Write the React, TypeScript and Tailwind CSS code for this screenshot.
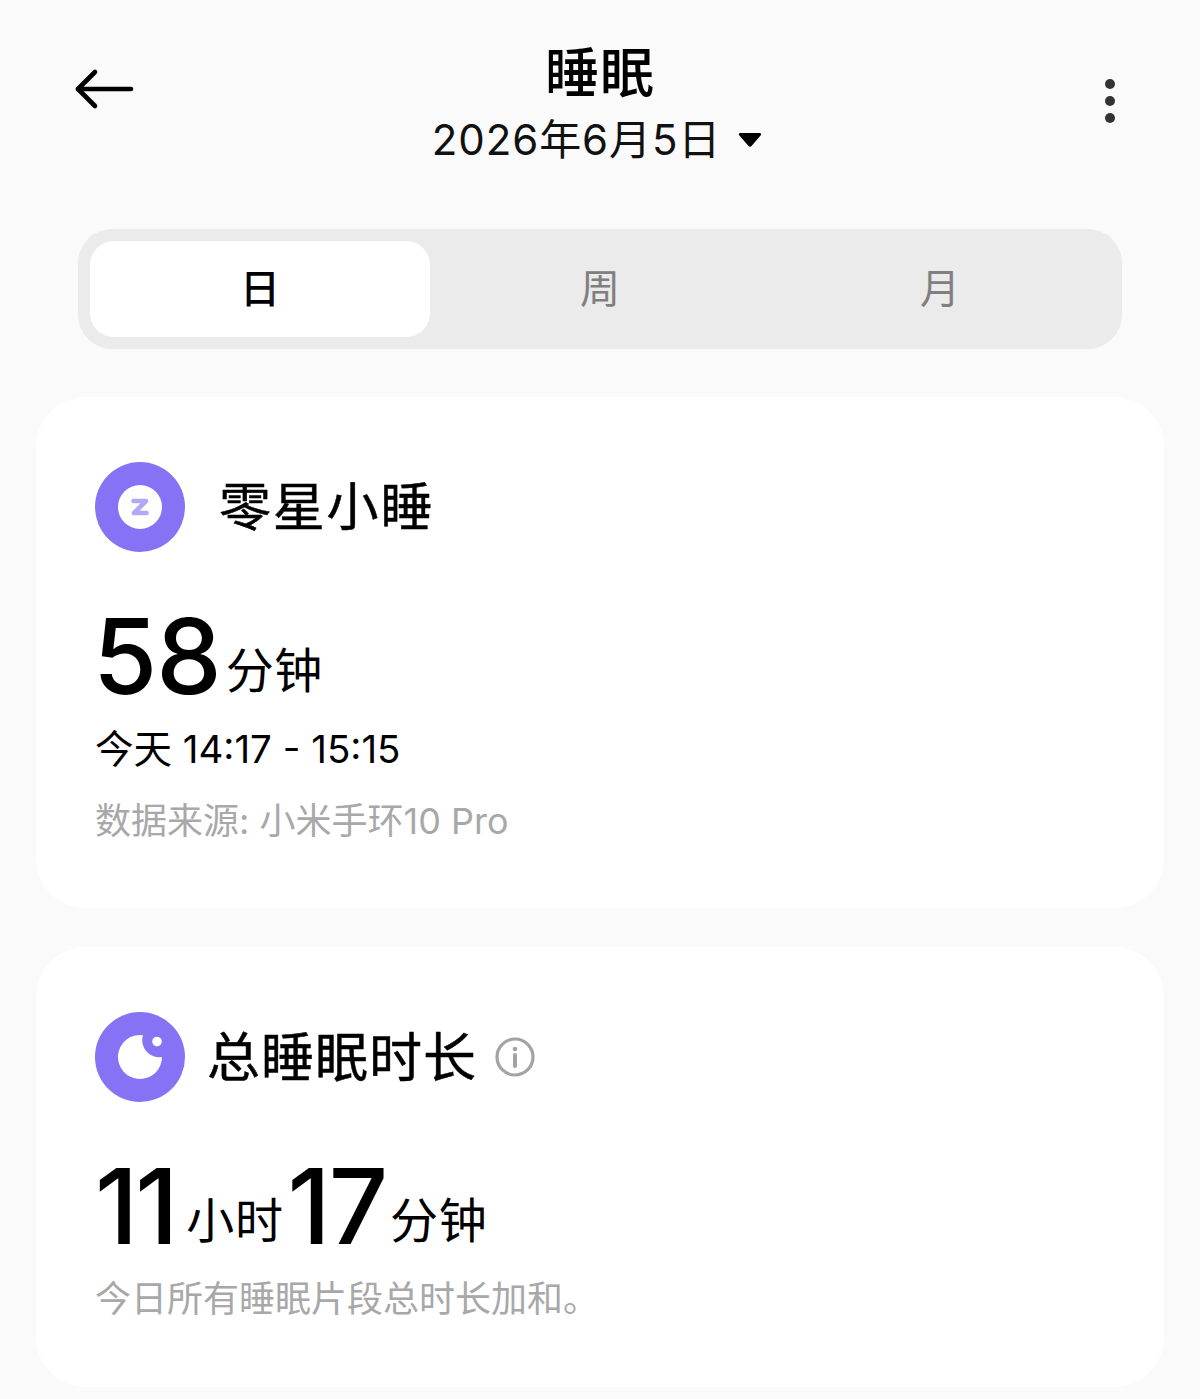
const sans = "font-['Inter','Noto_Sans_CJK_SC',sans-serif]";

function Tab({ label, active }: { label: string; active?: boolean }) {
  return (
    <div
      className={
        active
          ? "flex h-[96px] w-[340px] items-center justify-center rounded-[24px] bg-white text-[40px] font-medium text-black"
          : "flex h-[96px] w-[340px] items-center justify-center text-[40px] text-[#808080]"
      }
    >
      {label}
    </div>
  );
}

function Badge({ children }: { children: React.ReactNode }) {
  return (
    <div className="flex h-[90px] w-[90px] shrink-0 items-center justify-center rounded-full bg-[#8672f5]">
      {children}
    </div>
  );
}

export default function App() {
  return (
    <div className={`${sans} h-[1399px] w-[1200px] overflow-hidden bg-[#fafafa] text-black`}>
      <header className="grid h-[229px] grid-cols-[1fr_auto_1fr] items-start px-[85px]">
        <svg className="ml-[-11px] mt-[68px] h-[42px] w-[62px]" viewBox="0 0 62 42" fill="none" stroke="#000" strokeWidth="4.6" strokeLinecap="round" strokeLinejoin="round">
          <path d="M4 21H57" />
          <path d="M21 4L4 21L21 38" />
        </svg>
        <div className="flex flex-col items-center pt-[38px]">
          <div className="text-[54px] font-medium leading-[72px] tracking-[1px] text-black">睡眠</div>
          <div className="mr-[6px] flex items-center text-[42px] leading-[60px] tracking-[0.9px] text-[#111]">
            <span>2026年6月5日</span>
            <svg className="ml-[17px] h-[16px] w-[24px]" viewBox="0 0 24 16" fill="#000">
              <path d="M2 1H22C23 1 23.5 2 23 3L13.5 14C12.7 15 11.3 15 10.5 14L1 3C.5 2 1 1 2 1Z" />
            </svg>
          </div>
        </div>
        <div className="mt-[79px] flex flex-col gap-[7px] justify-self-end">
          <span className="h-[10px] w-[10px] rounded-full bg-[#333]" />
          <span className="h-[10px] w-[10px] rounded-full bg-[#333]" />
          <span className="h-[10px] w-[10px] rounded-full bg-[#333]" />
        </div>
      </header>

      <div className="mx-[78px] flex h-[120px] items-center rounded-[34px] bg-[#ebebeb] px-[12px]">
        <Tab label="日" active />
        <Tab label="周" />
        <Tab label="月" />
      </div>

      <section className="mx-[36px] mt-[48px] h-[511px] rounded-[50px] bg-white pl-[59px] pt-[65px]">
        <div className="flex items-center">
          <Badge>
            <div className="flex h-[44px] w-[44px] items-center justify-center rounded-full bg-white">
              <svg className="h-[18px] w-[18px]" viewBox="0 0 18 18" fill="none" stroke="#b3a8f8" strokeWidth="4.6" strokeLinecap="round" strokeLinejoin="round">
                <path d="M2.5 3H15L3 15H15.5" />
              </svg>
            </div>
          </Badge>
          <div className="ml-[34px] pt-[2px] text-[52px] leading-[70px] tracking-[1.8px] text-black [-webkit-text-stroke:0.5px_black]">零星小睡</div>
        </div>
        <div className="ml-[-2px] mt-[47px] flex items-end">
          <span className="text-[104px] font-medium leading-[114px] tracking-[-1px]">58</span>
          <span className="mb-[9px] ml-[5px] text-[48px] leading-[66px] tracking-[0.6px] text-black">分钟</span>
        </div>
        <div className="mt-[9px] text-[38.5px] leading-[54px] text-black">今天 14:17 - 15:15</div>
        <div className="mt-[20px] text-[36px] leading-[50px] text-[#a8a8a8]">数据来源: 小米手环10 Pro</div>
      </section>

      <section className="mx-[36px] mt-[39px] h-[440px] rounded-[50px] bg-white pl-[59px] pt-[65px]">
        <div className="flex items-center">
          <Badge>
            <svg className="h-[46px] w-[46px]" viewBox="0 0 46 46" fill="#fff">
              <path d="M26 1.2A17 17 0 0 0 45 23A22 22 0 1 1 26 1.2Z" />
              <circle cx="40" cy="7.5" r="4.8" />
            </svg>
          </Badge>
          <div className="ml-[22px] pt-[1px] text-[53px] leading-[70px] tracking-[1px] text-black [-webkit-text-stroke:0.5px_black]">总睡眠时长</div>
          <svg className="ml-[18px] h-[40px] w-[40px]" viewBox="0 0 40 40" fill="none" stroke="#a3a3a3">
            <circle cx="20" cy="20" r="18" strokeWidth="3.2" />
            <path d="M20 18V29" strokeWidth="4" strokeLinecap="round" />
            <circle cx="20" cy="12" r="2.3" fill="#a3a3a3" stroke="none" />
          </svg>
        </div>
        <div className="mt-[47px] flex items-end">
          <span className="text-[104px] font-medium leading-[114px] tracking-[-3px]">11</span>
          <span className="mb-[9px] ml-[11px] text-[48px] leading-[66px] tracking-[0.6px] text-black">小时</span>
          <span className="ml-[4px] text-[104px] font-medium leading-[114px] tracking-[-2px]">17</span>
          <span className="mb-[9px] ml-[4px] text-[48px] leading-[66px] tracking-[0.6px] text-black">分钟</span>
        </div>
        <div className="mt-[11px] text-[36px] leading-[50px] text-[#a8a8a8]">今日所有睡眠片段总时长加和。</div>
      </section>
    </div>
  );
}
